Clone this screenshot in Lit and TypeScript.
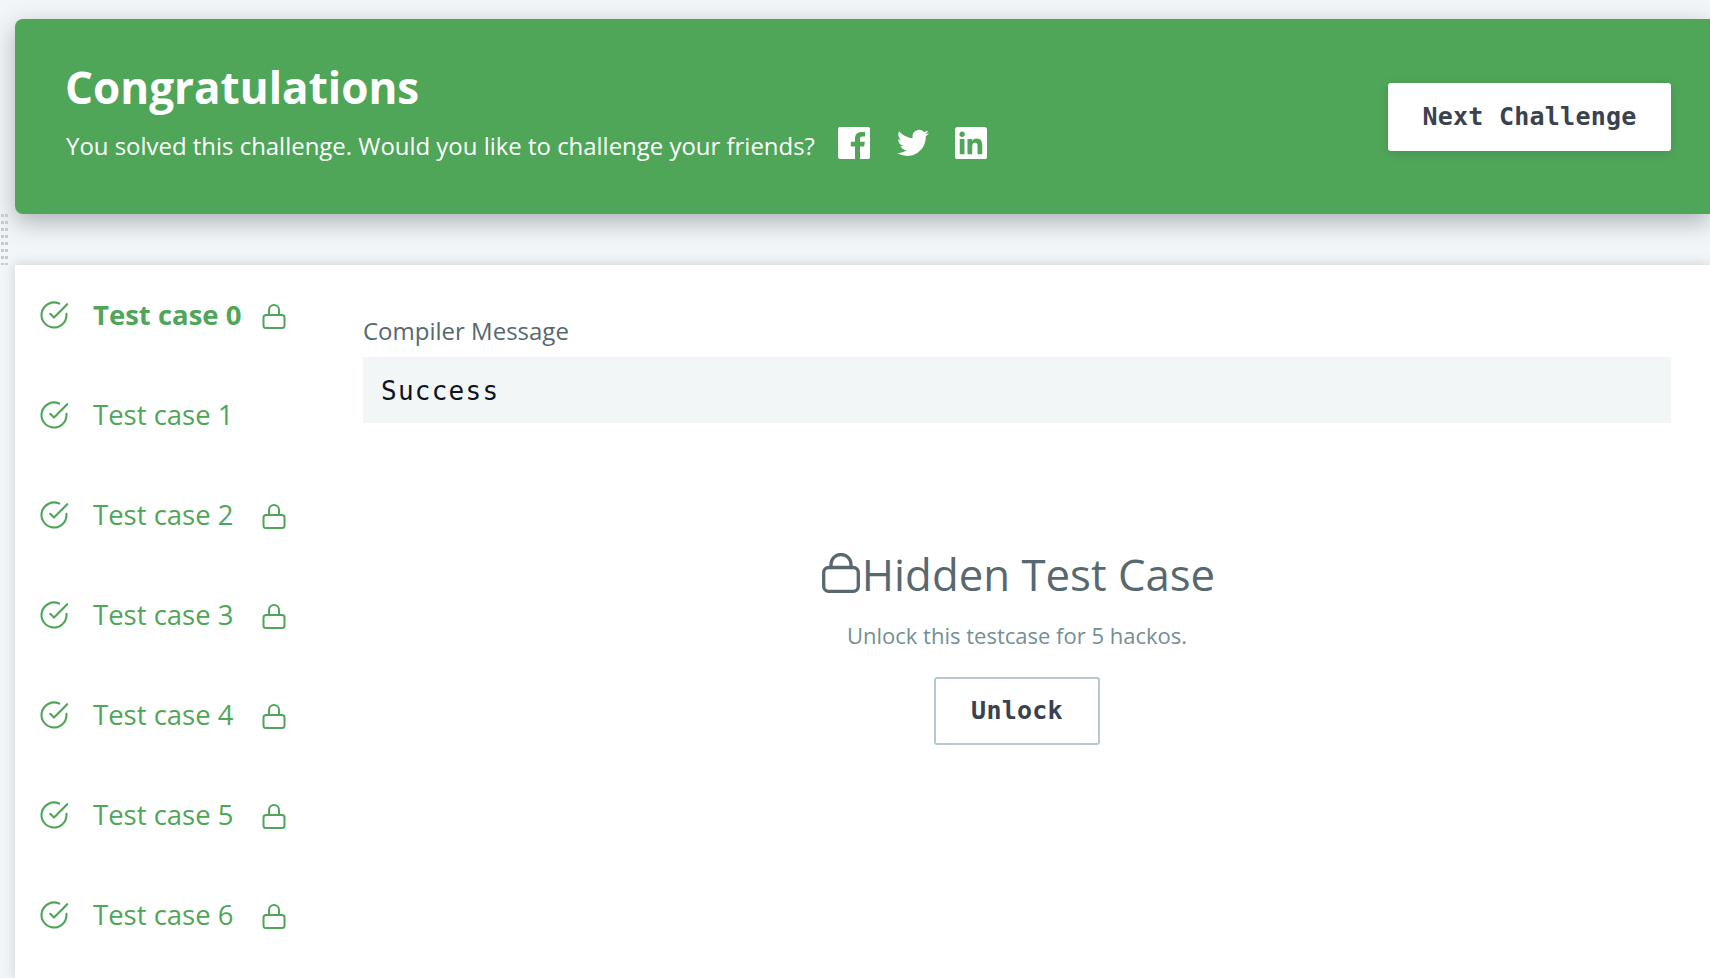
import { LitElement, html, css, svg } from "lit";
import { customElement } from "lit/decorators.js";

const smallLock = html`<svg class="smlock" viewBox="0 0 24 26" fill="none" stroke="currentColor" stroke-width="2" stroke-linejoin="round" stroke-linecap="round"><rect x="1.5" y="11" width="21" height="13" rx="2.5"></rect><path d="M7 11V6a5 5 0 0 1 10 0v5"></path></svg>`;
const bigLock = html`<svg class="biglock" viewBox="0 0 38 40" fill="none" stroke="currentColor" stroke-width="3.3" stroke-linejoin="round" stroke-linecap="round"><rect x="1.7" y="14.5" width="34.6" height="23.8" rx="5"></rect><path d="M9 14.5V11.5a10 10 0 0 1 20 0v3"></path></svg>`;

const check = html`<svg class="check" viewBox="0 0 24 24" fill="none" stroke="currentColor" stroke-width="1.7" stroke-linecap="round" stroke-linejoin="round"><path d="M22 11.08V12a10 10 0 1 1-5.93-9.14"></path><path d="M22.6 3.4 12 14.01l-3-3"></path></svg>`;

const fb = svg`<path fill-rule="evenodd" d="M2 0h28a2 2 0 0 1 2 2v28a2 2 0 0 1-2 2h-8V19.6h4.2l.6-4.8H22v-3.1c0-1.4.4-2.3 2.4-2.3H27V5.1c-.5-.1-2-.2-3.7-.2-3.7 0-6.3 2.3-6.3 6.4v3.5h-4.2v4.8H17V32H2a2 2 0 0 1-2-2V2a2 2 0 0 1 2-2z"></path>`;
const tw = svg`<path d="M23.953 4.57a10 10 0 01-2.825.775 4.958 4.958 0 002.163-2.723c-.951.555-2.005.959-3.127 1.184a4.92 4.92 0 00-8.384 4.482C7.69 8.095 4.067 6.13 1.64 3.162a4.822 4.822 0 00-.666 2.475c0 1.71.87 3.213 2.188 4.096a4.904 4.904 0 01-2.228-.616v.06a4.923 4.923 0 003.946 4.827 4.996 4.996 0 01-2.212.085 4.936 4.936 0 004.604 3.417 9.867 9.867 0 01-6.102 2.105c-.39 0-.779-.023-1.17-.067a13.995 13.995 0 007.557 2.209c9.053 0 13.998-7.496 13.998-13.985 0-.21 0-.42-.015-.63A9.935 9.935 0 0024 4.59z"></path>`;
const li = svg`<path d="M20.447 20.452h-3.554v-5.569c0-1.328-.027-3.037-1.852-3.037-1.853 0-2.136 1.445-2.136 2.939v5.667H9.351V9h3.414v1.561h.046c.477-.9 1.637-1.85 3.37-1.85 3.601 0 4.267 2.37 4.267 5.455v6.286zM5.337 7.433c-1.144 0-2.063-.926-2.063-2.065 0-1.138.92-2.063 2.063-2.063 1.14 0 2.064.925 2.064 2.063 0 1.139-.925 2.065-2.064 2.065zm1.782 13.019H3.555V9h3.564v11.452zM22.225 0H1.771C.792 0 0 .774 0 1.729v20.542C0 23.227.792 24 1.771 24h20.451C23.2 24 24 23.227 24 22.271V1.729C24 .774 23.2 0 22.222 0h.003z"></path>`;

@customElement("app-root")
export class AppRoot extends LitElement {
  static styles = css`
    :host {
      display: block;
      height: 978px;
      overflow: hidden;
      background: #f3f6f8;
      font-family: "Open Sans", "Noto Sans", sans-serif;
      position: relative;
    }
    .page { padding: 19px 0 0 15px; }
    .banner {
      height: 195px;
      box-sizing: border-box;
      background: #4fa659;
      border-radius: 8px 0 0 8px;
      box-shadow: 0 8px 24px rgba(57, 66, 78, 0.38);
      padding: 0 39px 0 50px;
      display: flex;
      align-items: center;
      justify-content: space-between;
      color: #fff;
    }
    .left { align-self: flex-start; padding-top: 38px; }
    .title { font-size: 44px; font-weight: 700; line-height: 60px; }
    .sub { display: flex; align-items: center; font-size: 23.95px; font-weight: 400; line-height: 40px; margin-top: 9px; margin-left: 1px; }
    .socials { display: flex; align-items: center; margin-left: 23px; margin-top: -7px; }
    .socials svg { fill: #fff; display: block; }
    .fb { width: 32px; height: 32px; }
    .tw { width: 32px; height: 32px; margin-left: 27px; }
    .li { width: 32px; height: 32px; margin-left: 26px; }
    .next {
      width: 283px;
      height: 68px;
      background: #fff;
      border-radius: 3px;
      box-shadow: 0 2px 12px rgba(0, 0, 0, 0.12);
      color: #39424e;
      font: 700 25px "DejaVu Sans Mono", monospace;
      letter-spacing: 0.25px;
      display: flex;
      align-items: center;
      justify-content: center;
    }
    .panel {
      margin-top: 51px;
      background: #fff;
      height: 713px;
      display: flex;
      box-shadow: 0 0 12px rgba(57, 66, 78, 0.22);
    }
    .cases { width: 348px; padding-left: 24px; box-sizing: border-box; flex: none; }
    .case {
      height: 100px;
      display: flex;
      align-items: center;
      color: #4fa659;
      font-size: 27.5px;
      font-weight: 400;
    }
    .case.active { font-weight: 700; }
    .check { width: 30px; height: 30px; flex: none; margin-right: 24px; }
    .name { width: 169px; flex: none; white-space: nowrap; margin-top: -2px; }
    .smlock { width: 24px; height: 26px; flex: none; margin-top: 3px; }
    .main { flex: 1; padding-right: 39px; min-width: 0; }
    .label { font-size: 24px; color: #576871; line-height: 33px; margin-top: 49px; }
    .msg {
      margin-top: 10px;
      height: 66px;
      box-sizing: border-box;
      padding: 2px 0 0 18px;
      background: #f3f6f6;
      display: flex;
      align-items: center;
      color: #0e141e;
      font: 400 26px "DejaVu Sans Mono", monospace;
      letter-spacing: 1.25px;
    }
    .hidden { display: flex; flex-direction: column; align-items: center; margin-top: 121px; }
    .h { display: flex; align-items: center; gap: 2px; margin-left: 3px; font-size: 43.75px; line-height: 60px; color: #576871; }
    .biglock { width: 38px; height: 40px; flex: none; margin-top: -2px; }
    .unlocktxt { font-size: 22px; color: #738f93; line-height: 30px; margin-top: 16px; }
    .unlock {
      margin-top: 27px;
      width: 166px;
      height: 68px;
      box-sizing: border-box;
      padding-bottom: 2px;
      border: 2px solid #b7c9cc;
      border-radius: 3px;
      display: flex;
      align-items: center;
      justify-content: center;
      color: #39424e;
      font: 700 25px "DejaVu Sans Mono", monospace;
      letter-spacing: 0.25px;
    }
    .grip {
      position: absolute;
      left: 1px;
      top: 214px;
      width: 8px;
      height: 51px;
      background-image: linear-gradient(90deg, #c4cacd 3px, transparent 3px, transparent 4px, #c4cacd 4px, #c4cacd 7px, transparent 7px);
      -webkit-mask-image: linear-gradient(180deg, #000 3px, transparent 3px);
      -webkit-mask-size: 100% 7px;
      mask-image: linear-gradient(180deg, #000 3px, transparent 3px);
      mask-size: 100% 7px;
    }
  `;

  render() {
    const rows = [0, 1, 2, 3, 4, 5, 6];
    return html`
      <div class="grip"></div>
      <div class="page">
        <div class="banner">
          <div class="left">
            <div class="title">Congratulations</div>
            <div class="sub">
              <span>You solved this challenge. Would you like to challenge your friends?</span>
              <span class="socials">
                <svg class="fb" viewBox="0 0 32 32">${fb}</svg>
                <svg class="tw" viewBox="0 0 24 24">${tw}</svg>
                <svg class="li" viewBox="0 0 24 24">${li}</svg>
              </span>
            </div>
          </div>
          <div class="next">Next Challenge</div>
        </div>
        <div class="panel">
          <div class="cases">
            ${rows.map(
              (i) => html`<div class="case ${i === 0 ? "active" : ""}">
                ${check}
                <span class="name">Test case ${i}</span>
                ${i === 1 ? "" : smallLock}
              </div>`
            )}
          </div>
          <div class="main">
            <div class="label">Compiler Message</div>
            <div class="msg">Success</div>
            <div class="hidden">
              <div class="h">${bigLock}<span>Hidden Test Case</span></div>
              <div class="unlocktxt">Unlock this testcase for 5 hackos.</div>
              <div class="unlock">Unlock</div>
            </div>
          </div>
        </div>
      </div>
    `;
  }
}
